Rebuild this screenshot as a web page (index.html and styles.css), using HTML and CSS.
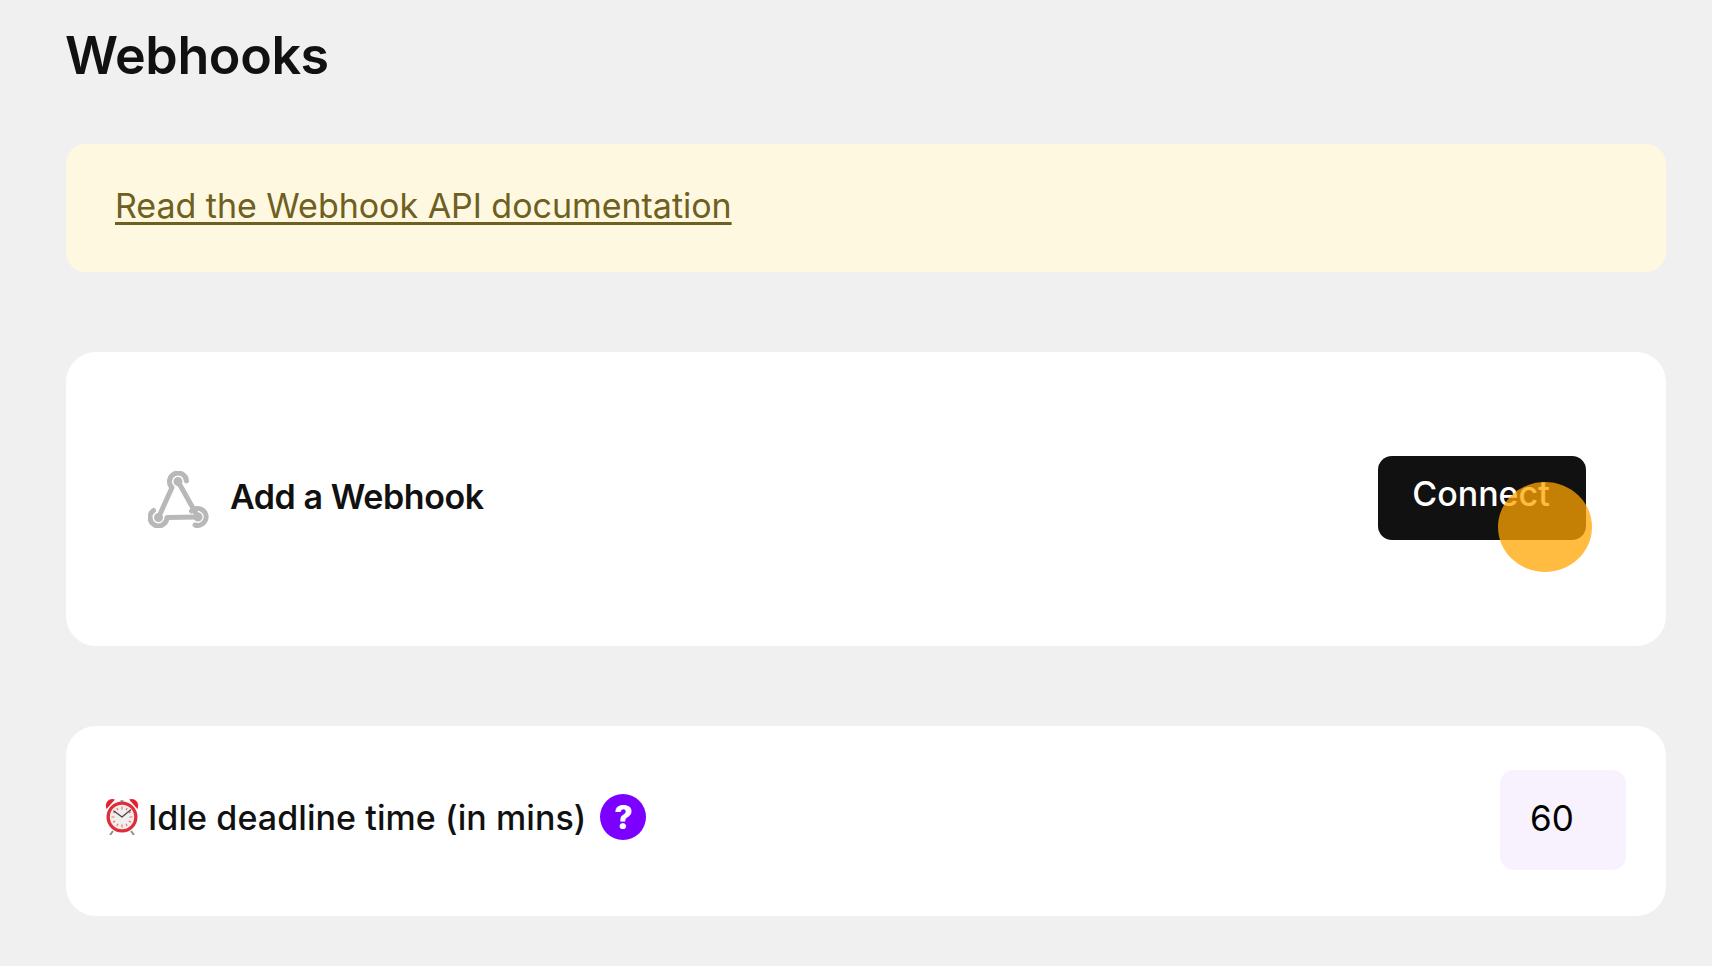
FILE: index.html
```html
<!DOCTYPE html>
<html lang="en">
<head>
<meta charset="utf-8">
<title>Webhooks</title>
<link rel="stylesheet" href="styles.css">
</head>
<body>
<main class="page">
  <h1 class="title">Webhooks</h1>
  <div class="notice"><a class="notice-link" href="#">Read the Webhook API documentation</a></div>
  <section class="card card-connect">
    <div class="connect-label">
      <svg class="hook-icon" viewBox="0 0 61 57" fill="none" stroke="#b8b8b8" stroke-width="5" stroke-linecap="round" stroke-linejoin="round" aria-hidden="true">
        <path d="M38.5 10 A8.5 8.5 0 1 0 24 16.5 L10.5 46.5"/>
        <path d="M30 10.5 L50 46"/>
        <path d="M5.5 39.5 A8.5 8.5 0 1 0 19 46.5 L50 46"/>
        <path d="M43.5 40 A8.5 8.5 0 1 1 47 54"/>
        <circle cx="30" cy="10.5" r="2" fill="#b8b8b8"/>
        <circle cx="10.5" cy="46.5" r="2" fill="#b8b8b8"/>
        <circle cx="50" cy="46" r="2" fill="#b8b8b8"/>
      </svg>
      <span class="connect-text">Add a Webhook</span>
    </div>
    <div class="connect-action">
      <button class="connect-btn" type="button">Connect</button>
      <span class="touch-dot"></span>
    </div>
  </section>
  <section class="card card-idle">
    <div class="idle-label">
      <svg class="clock" viewBox="0 0 34 38" aria-hidden="true">
        <path d="M8 34 L5 38 M26 34 L29 38" stroke="#8a8f94" stroke-width="2" fill="none"/>
        <path d="M1.5 12 C-1 6 4 0 10 2.5 Z" fill="#e5202e"/>
        <path d="M32.5 12 C35 6 30 0 24 2.5 Z" fill="#e5202e"/>
        <path d="M15.5 3 h3 v3 h-3z" fill="#9aa0a5"/>
        <circle cx="17" cy="20" r="15.5" fill="#dd2e3a"/>
        <circle cx="17" cy="20" r="12.2" fill="#f3eeee"/>
        <path d="M17 9.5v3M17 27.5v3M6.5 20h3M24.5 20h3M11.8 11l1.2 2.2M22.2 11l-1.2 2.2M11.8 29l1.2-2.2M22.2 29l-1.2-2.2M8 14.8l2.2 1.2M26 14.8l-2.2 1.2M8 25.2l2.2-1.2M26 25.2l-2.2-1.2" stroke="#ea6a70" stroke-width="1.1" fill="none"/>
        <path d="M17 20 L9 14 M17 20 L25.5 13" stroke="#4a4a4a" stroke-width="1.3" stroke-linecap="round" fill="none"/>
      </svg>
      <span class="idle-text">Idle deadline time (in mins)</span>
      <span class="help-badge">?</span>
    </div>
    <div class="idle-input">60</div>
  </section>
</main>
</body>
</html>
```
FILE: styles.css
```css
* { box-sizing: border-box; }
html, body { margin: 0; height: 100%; }
body {
  background: #f0f0f0;
  color: #111;
  font-family: Inter, "Liberation Sans", sans-serif;
  overflow: hidden;
}
.page { padding: 0 46px 0 66px; }
.title {
  margin: 0 0 0 -1px;
  height: 144px;
  padding-top: 25px;
  font-size: 52px;
  line-height: 62px;
  font-weight: 600;
  letter-spacing: -0.4px;
}
.notice {
  height: 128px;
  padding: 0 49px;
  display: flex;
  align-items: center;
  background: #fff8e0;
  border-radius: 20px;
  margin-bottom: 80px;
}
.notice-link {
  color: #6e5f22;
  font-size: 34px;
  line-height: 44px;
  letter-spacing: -0.03px;
  text-decoration: underline;
  text-decoration-thickness: 2.5px;
  text-underline-offset: 4px;
  margin-top: -5px;
}
.card {
  background: #fff;
  border-radius: 30px;
  display: flex;
  align-items: center;
  justify-content: space-between;
}
.card-connect {
  height: 294px;
  padding: 0 80px 0 82px;
  margin-bottom: 80px;
}
.connect-label { display: flex; align-items: center; gap: 21px; }
.hook-icon { width: 61px; height: 57px; flex: none; }
.connect-text {
  margin-top: -4px;
  font-size: 34px;
  line-height: 44px;
  font-weight: 600;
  letter-spacing: -0.42px;
}
.connect-action { position: relative; margin-bottom: 2px; }
.connect-btn {
  display: block;
  width: 208px;
  height: 84px;
  padding: 0 2px 8px 0;
  border: 0;
  border-radius: 14px;
  background: #111;
  color: #fff;
  font: 500 34px/44px Inter, "Liberation Sans", sans-serif;
}
.touch-dot {
  position: absolute;
  left: 120px;
  top: 26px;
  width: 94px;
  height: 90px;
  border-radius: 50%;
  background: rgba(255, 165, 0, 0.75);
}
.card-idle {
  height: 190px;
  padding: 0 40px 0 39px;
}
.idle-label { display: flex; align-items: center; margin-bottom: 7px; }
.clock { width: 34px; height: 38px; flex: none; margin: 0 9px 3px 0; }
.idle-text {
  font-size: 34px;
  line-height: 44px;
  font-weight: 500;
  letter-spacing: 0.08px;
}
.help-badge {
  width: 46px;
  height: 46px;
  margin: 0 0 1px 14px;
  border-radius: 50%;
  background: #7b00ff;
  color: #fff;
  font-size: 32px;
  font-weight: 800;
  display: flex;
  align-items: center;
  justify-content: center;
}
.idle-input {
  width: 126px;
  height: 100px;
  margin-bottom: 2px;
  padding: 0 0 4px 30px;
  display: flex;
  align-items: center;
  background: #f7f2fe;
  border-radius: 14px;
  color: #000;
  font-family: Inter, "Liberation Sans", sans-serif;
  font-size: 35px;
  font-weight: 400;
}
```
